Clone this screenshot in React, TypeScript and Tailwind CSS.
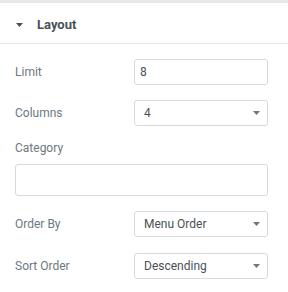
import React from "react";

const Caret = ({ className }: { className?: string }) => (
  <svg width="7" height="4" viewBox="0 0 7 4" className={className}>
    <path d="M0 0h7L3.5 4z" fill="currentColor" />
  </svg>
);

function Row({ label, children }: { label: string; children: React.ReactNode }) {
  return (
    <div className="flex items-center h-[26px]">
      <div className="w-[119px] text-[12px] text-[#6d7882]">{label}</div>
      {children}
    </div>
  );
}

function TextInput({ value }: { value: string }) {
  return (
    <div className="flex-1 h-[26px] flex items-center border border-[#d5dadf] rounded-[3px] pl-[5px] text-[12px] text-[#495157]">
      {value}
    </div>
  );
}

function Select({ value }: { value: string }) {
  return (
    <div className="flex-1 h-[26px] flex items-center justify-between border border-[#d5dadf] rounded-[3px] pl-[9px] pr-[7px] text-[12px] text-[#495157]">
      <span>{value}</span>
      <Caret className="text-[#6d7882]" />
    </div>
  );
}

export default function App() {
  return (
    <div className="w-[288px] h-[292px] bg-white overflow-hidden" style={{ fontFamily: "Roboto, sans-serif" }}>
      <div className="h-[3px] bg-[#e6e9ec]" />
      <div className="h-[41px] flex items-center pl-4 pt-[3px] border-b border-[#e6e9ec]">
        <Caret className="text-[#495157] mr-[14px]" />
        <span className="text-[13px] font-bold text-[#495157]">Layout</span>
      </div>
      <div className="pl-[15px] pr-[20px] pt-[15px] flex flex-col">
        <Row label="Limit">
          <TextInput value="8" />
        </Row>
        <div className="mt-[15px]">
          <Row label="Columns">
            <Select value="4" />
          </Row>
        </div>
        <div className="mt-[14px] text-[12px] leading-[16px] text-[#6d7882]">Category</div>
        <div className="mt-[8px] h-[32px] border border-[#d5dadf] rounded-[3px]" />
        <div className="mt-[15px]">
          <Row label="Order By">
            <Select value="Menu Order" />
          </Row>
        </div>
        <div className="mt-[16px]">
          <Row label="Sort Order">
            <Select value="Descending" />
          </Row>
        </div>
      </div>
    </div>
  );
}
